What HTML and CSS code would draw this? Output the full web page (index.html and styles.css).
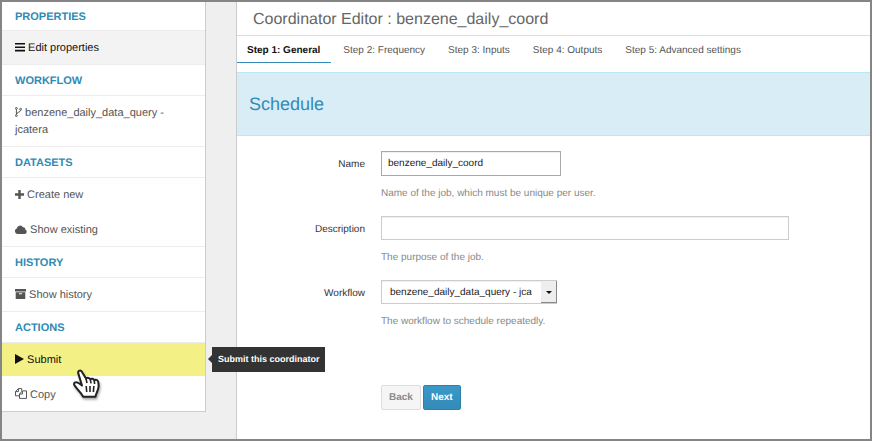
FILE: index.html
```html
<!DOCTYPE html>
<html lang="en">
<head>
<meta charset="utf-8">
<title>Coordinator Editor</title>
<link rel="stylesheet" href="styles.css">
</head>
<body>
<div class="frame">
  <nav class="sidebar">
    <h2 class="nav-header">PROPERTIES</h2>
    <a class="nav-item current" href="#"><svg class="icon" width="10" height="9" viewBox="0 0 10 9"><path d="M0 0h10v1.6H0zM0 3.4h10V5H0zM0 6.8h10v1.6H0z"/></svg> Edit properties</a>
    <h2 class="nav-header">WORKFLOW</h2>
    <a class="nav-item" href="#"><svg class="icon line" width="7" height="10" viewBox="0 0 7 10"><circle cx="1.4" cy="1.4" r=".9"/><circle cx="1.4" cy="8.6" r=".9"/><circle cx="5.6" cy="2.2" r=".9"/><path d="M1.4 2.3v5.4M5.6 3.1C5.6 5.6 1.6 4.8 1.4 7.5"/></svg> benzene_daily_data_query - jcatera</a>
    <h2 class="nav-header">DATASETS</h2>
    <a class="nav-item" href="#"><svg class="icon" width="9" height="9" viewBox="0 0 9 9"><path d="M3.3 0h2.4v3.3H9v2.4H5.7V9H3.3V5.7H0V3.3h3.3z"/></svg> Create new</a>
    <a class="nav-item" href="#"><svg class="icon" width="12" height="9" viewBox="0 0 12 9"><path d="M2.8 9A2.8 2.8 0 0 1 1.7 3.6 3.4 3.4 0 0 1 8 2.2a1.8 1.8 0 0 1 2.2 2.2A2.4 2.4 0 0 1 9.7 9z"/></svg> Show existing</a>
    <h2 class="nav-header">HISTORY</h2>
    <a class="nav-item" href="#"><svg class="icon" width="11" height="10" viewBox="0 0 11 10"><path fill-rule="evenodd" d="M0 0h11v2.6H0zM.7 3.3h9.6V10H.7zM4 4.2v1h3v-1z"/></svg> Show history</a>
    <h2 class="nav-header">ACTIONS</h2>
    <a class="nav-item submit" href="#"><svg class="icon" width="9" height="10" viewBox="0 0 9 10"><path d="M0 0l9 5-9 5z"/></svg> Submit
      <span class="tooltip" role="tooltip">Submit this coordinator</span>
      <svg class="pointer" width="30" height="34" viewBox="0 0 30 34"><path d="M9.5 3.2C7.8 1.7 5.6 3.1 6.3 5.4L10 17.6C7.6 15.4 4.6 13.2 2.8 14.6c-1.6 1.4-.4 3.2 1.6 5.2l4.4 5.4c1 1.4 2 2.3 2.3 3.6h12.4c.2-3.2 3-6.4 3.1-10.6.1-3.2-.3-5.4-1.6-6.2-1-.6-2.2-.3-2.7.6-.4-1.9-2.6-2.6-4-1.2-.7-1.6-2.8-2.1-4.3-.8z"/><path class="fingers" d="M14 10.6l1 4.4M18.3 11.4l.8 4M22.3 12.6l.3 3.4M14.2 18l.5 6M18 18v6M21.8 18l-.4 6"/></svg>
    </a>
    <a class="nav-item" href="#"><svg class="icon line" width="12" height="11" viewBox="0 0 12 11"><path d="M4.5 7.8H.5V3.6L3.4.6h3.3v2.2M3.4.6v3H.5M7.4 3v3H4.5M4.5 6v4.4h7V2.9H7.4z"/></svg> Copy</a>
  </nav>
  <main class="main">
    <h1 class="title">Coordinator Editor : benzene_daily_coord</h1>
    <nav class="tabs">
      <a class="tab active" href="#">Step 1: General</a>
      <a class="tab" href="#">Step 2: Frequency</a>
      <a class="tab" href="#">Step 3: Inputs</a>
      <a class="tab" href="#">Step 4: Outputs</a>
      <a class="tab" href="#">Step 5: Advanced settings</a>
    </nav>
    <h2 class="banner">Schedule</h2>
    <form class="form">
      <div class="row">
        <label class="label" for="name">Name</label>
        <div class="field">
          <input class="control short" id="name" type="text" value="benzene_daily_coord">
          <p class="help">Name of the job, which must be unique per user.</p>
        </div>
      </div>
      <div class="row">
        <label class="label" for="description">Description</label>
        <div class="field">
          <input class="control long" id="description" type="text">
          <p class="help">The purpose of the job.</p>
        </div>
      </div>
      <div class="row">
        <label class="label" for="workflow">Workflow</label>
        <div class="field">
          <div class="select">
            <select class="control" id="workflow"><option>benzene_daily_data_query - jcatera</option></select>
            <span class="arrow"></span>
          </div>
          <p class="help">The workflow to schedule repeatedly.</p>
        </div>
      </div>
      <div class="actions">
        <button class="btn" type="button" disabled>Back</button>
        <button class="btn primary" type="button">Next</button>
      </div>
    </form>
  </main>
</div>
</body>
</html>
```

FILE: styles.css
```css
* { box-sizing: border-box; }
body {
  margin: 0;
  background: #efefef;
  color: #333;
  font: 10px/17px "Liberation Sans", Arial, sans-serif;
  text-rendering: geometricPrecision;
}
h1, h2, p { margin: 0; }
a { color: inherit; text-decoration: none; }

.frame {
  display: grid;
  grid-template-columns: 204px 1fr;
  column-gap: 30px;
  min-height: 100vh;
  border: 2px solid #858585;
}

/* Sidebar */
.sidebar {
  align-self: start;
  background: #fff;
  border: solid #ccc;
  border-width: 0 1px 1px 0;
  font-size: 11px;
}
.nav-header {
  padding: 7px 13px 5px;
  border: solid #ececec;
  border-width: 1px 0;
  color: #2f8bb3;
  font-size: 11px;
  line-height: 18px;
}
.nav-header:first-child { padding: 6px 13px 4px; border-top: 0; }
.nav-item {
  display: block;
  position: relative;
  padding: 9px 13px 7px;
  color: #555;
}
.nav-item + .nav-item { margin-top: 2px; }
.nav-item.current { background: #f3f3f3; color: #111; }
.nav-item.submit { background: #f3f086; color: #111; }
.icon { fill: currentColor; vertical-align: -1px; }
.icon.line { fill: none; stroke: currentColor; stroke-width: 1; }

.tooltip {
  position: absolute;
  left: 210px;
  top: 4px;
  z-index: 2;
  padding: 4px 5px 4px 6px;
  background: #333;
  color: #fff;
  font-size: 9px;
  font-weight: bold;
  white-space: nowrap;
}
.tooltip::before {
  content: "";
  position: absolute;
  left: -4px;
  top: 8px;
  border: solid transparent;
  border-width: 4px 4px 4px 0;
  border-right-color: #333;
}
.pointer {
  position: absolute;
  left: 70px;
  top: 25px;
  z-index: 3;
  fill: #fff;
  stroke: #222;
  stroke-width: 2;
  stroke-linejoin: round;
  filter: drop-shadow(1px 2px 1px #0005);
}
.fingers { stroke-width: 1.6; }

/* Main panel */
.main {
  min-width: 0;
  background: #fff;
  border-left: 1px solid #ccc;
}
.title {
  padding: 8px 16px 5px;
  border-bottom: 1px solid #ddd;
  color: #666;
  font-size: 16px;
  font-weight: normal;
  line-height: 20px;
}
.tabs { display: flex; gap: 2px; color: #555; }
.tab {
  padding: 6px 11px 3px 10px;
  border-bottom: 1px solid transparent;
  white-space: nowrap;
}
.tab.active {
  border-color: #338bb8;
  color: #111;
  font-weight: bold;
}
.banner {
  margin-top: 9px;
  padding: 20px 12px;
  background: #d9edf7;
  border: solid #bce8f1;
  border-width: 1px 0;
  color: #338bb8;
  font-size: 18px;
  font-weight: normal;
  line-height: 22px;
}

/* Form */
.form { padding: 15px 12px 24px 0; }
.row {
  display: grid;
  grid-template-columns: 128px 1fr;
  column-gap: 16px;
  margin-bottom: 14px;
}
.label { padding-top: 5px; text-align: right; }
.field { min-width: 0; }
.control {
  display: block;
  width: 100%;
  height: 24px;
  padding: 0 6px;
  border: 1px solid #ccc;
  border-radius: 0;
  background: #fff;
  box-shadow: inset 0 1px 1px #0001;
  color: #222;
  font: inherit;
  text-rendering: inherit;
}
.short { max-width: 180px; height: 25px; border-color: #aaa; }
.long { max-width: 408px; }
.help { padding-top: 9px; color: #888; }
.select { position: relative; max-width: 176px; }
.select .control { appearance: none; padding: 0 24px 0 8px; }
.arrow {
  position: absolute;
  top: 1px;
  right: 0;
  bottom: 1px;
  width: 16px;
  border: solid #888;
  border-width: 0 1px 1px 0;
  background: #eee;
  pointer-events: none;
}
.arrow::after {
  content: "";
  position: absolute;
  left: 5px;
  top: 10px;
  border: solid transparent;
  border-width: 3px 3px 0;
  border-top-color: #111;
}
.actions { display: flex; gap: 2px; margin: 55px 0 0 144px; }
.btn {
  height: 25px;
  padding: 0 7px;
  border: 1px solid #ddd;
  border-radius: 2px;
  background: #f5f5f5;
  color: #888;
  font: bold 10px/17px "Liberation Sans", Arial, sans-serif;
  text-rendering: inherit;
}
.btn.primary {
  border-color: #2f81a9;
  background: linear-gradient(#3a98c8, #338bb8);
  color: #fff;
}
```
